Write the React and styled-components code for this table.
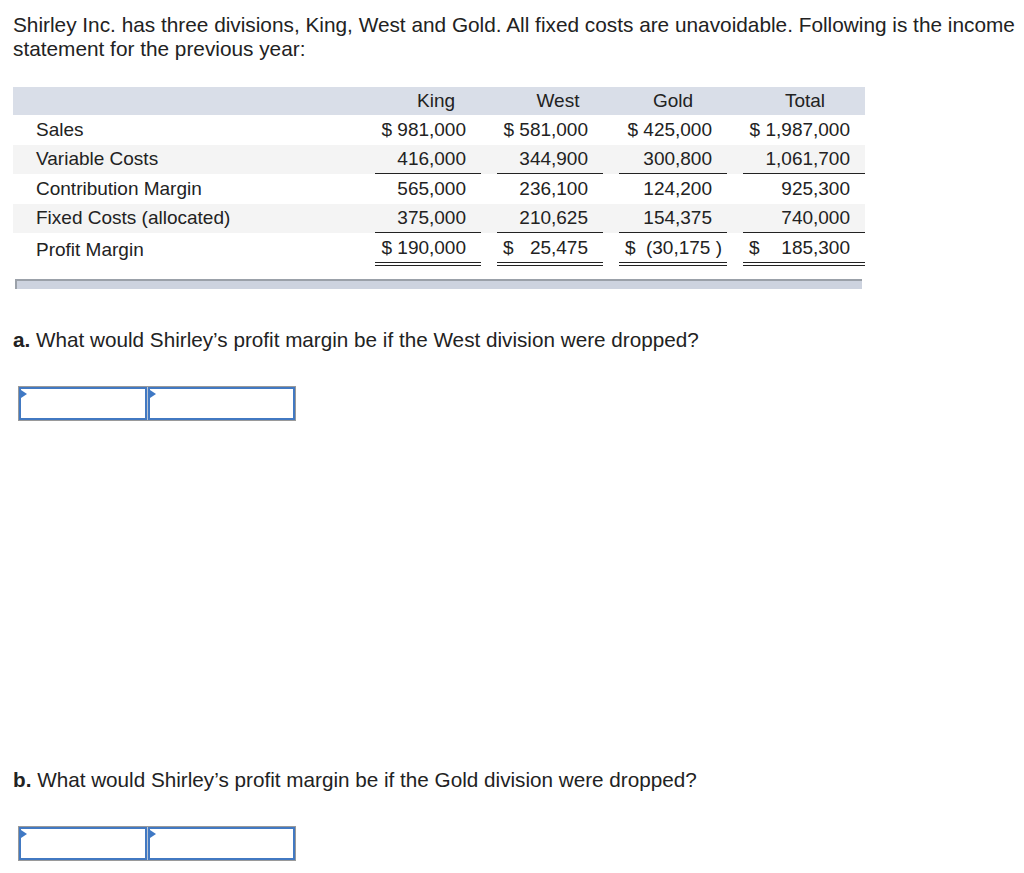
import React from 'react';
import styled, { createGlobalStyle } from 'styled-components';

const GlobalStyle = createGlobalStyle`
  body {
    margin: 0;
    background: #fff;
    font-family: 'Liberation Sans', Arial, sans-serif;
    color: #222;
  }
`;

const Page = styled.div`
  width: 1024px;
  height: 873px;
  padding: 13px 0 0 13px;
  box-sizing: border-box;
  overflow: hidden;
`;

const Intro = styled.p`
  margin: 0;
  font-size: 20.8px;
  line-height: 24px;
  width: 1010px;
`;

const Table = styled.div`
  margin-top: 26px;
  width: 852px;
  font-size: 19px;
`;

const Row = styled.div`
  display: flex;
  align-items: stretch;
  height: ${p => p.h || 29.5}px;
  background: ${p => p.bg || '#fff'};
`;

const Label = styled.div`
  width: 362px;
  padding-left: 23px;
  box-sizing: border-box;
  display: flex;
  align-items: center;
`;

const Cell = styled.div`
  width: ${p => p.w}px;
  margin-right: ${p => p.gap}px;
  box-sizing: border-box;
  display: flex;
  align-items: center;
  justify-content: space-between;
  padding: 0 ${p => (p.hang ? 5 : 15)}px 0 6px;
  border-bottom: ${p => p.line === 'single' ? '1px solid #222' : p.line === 'double' ? '4px double #222' : 'none'};
`;

const HeadCell = styled.div`
  width: ${p => p.w}px;
  margin-right: ${p => p.gap}px;
  box-sizing: border-box;
  display: flex;
  align-items: center;
  justify-content: center;
  padding-left: ${p => p.shift * 2}px;
`;

const Amount = styled.span`
  margin-left: auto;
`;

const ScrollBar = styled.div`
  margin: 13px 0 0 2px;
  width: 847px;
  height: 10px;
  box-sizing: border-box;
  background: #cdd3df;
  border-top: 2px solid #9ba1a9;
  border-left: 2px solid #9ba1a9;
`;

const Question = styled.p`
  margin: ${p => p.top}px 0 0;
  font-size: 20.7px;
  line-height: 24px;
`;

const Answer = styled.div`
  margin: ${p => p.top}px 0 0 5px;
  width: 278px;
  height: 35px;
  box-sizing: border-box;
  border: 1px solid #9a9a9a;
  display: flex;
  gap: 1px;
  background: #b9c4d4;
`;

const Field = styled.div`
  position: relative;
  width: ${p => p.w}px;
  height: 100%;
  box-sizing: border-box;
  border: 2px solid #4279c2;
  background: #fff;

  &::before {
    content: '';
    position: absolute;
    left: 0;
    top: 1px;
    border-left: 6px solid #3f78c4;
    border-top: 4px solid transparent;
    border-bottom: 4px solid transparent;
  }
`;

const columns = [
  { name: 'King', w: 106, gap: 16, shift: 8 },
  { name: 'West', w: 106, gap: 16, shift: 8 },
  { name: 'Gold', w: 108, gap: 16, shift: 0 },
  { name: 'Total', w: 122, gap: 0, shift: 1 },
];

const rows = [
  { label: 'Sales', values: ['981,000', '581,000', '425,000', '1,987,000'], dollar: 'joined' },
  { label: 'Variable Costs', values: ['416,000', '344,900', '300,800', '1,061,700'], bg: '#f4f4f4', line: 'single' },
  { label: 'Contribution Margin', values: ['565,000', '236,100', '124,200', '925,300'] },
  { label: 'Fixed Costs (allocated)', values: ['375,000', '210,625', '154,375', '740,000'], bg: '#f4f4f4', line: 'single' },
  { label: 'Profit Margin', values: ['190,000', '25,475', '(30,175 )', '185,300'], dollar: 'split', line: 'double', h: 33 },
];

function AnswerRow({ top }) {
  return (
    <Answer top={top}>
      <Field w={128} />
      <Field w={147} />
    </Answer>
  );
}

function Value({ v, dollar, first }) {
  if (dollar === 'joined' || (dollar === 'split' && first)) return <Amount>$ {v}</Amount>;
  if (dollar === 'split') {
    return (
      <>
        <span>$</span>
        <Amount>{v}</Amount>
      </>
    );
  }
  return <Amount>{v}</Amount>;
}

export default function App() {
  return (
    <Page>
      <GlobalStyle />
      <Intro>
        Shirley Inc. has three divisions, King, West and Gold. All fixed costs are unavoidable. Following is the income
        statement for the previous year:
      </Intro>

      <Table>
        <Row bg="#d9dee8" h={28}>
          <Label />
          {columns.map(c => (
            <HeadCell key={c.name} w={c.w} gap={c.gap} shift={c.shift}>
              {c.name}
            </HeadCell>
          ))}
        </Row>
        {rows.map(r => (
          <Row key={r.label} bg={r.bg} h={r.h}>
            <Label>{r.label}</Label>
            {columns.map((c, i) => (
              <Cell key={c.name} w={c.w} gap={c.gap} line={r.line} hang={r.values[i].endsWith(')')}>
                <Value v={r.values[i]} dollar={r.dollar} first={i === 0} />
              </Cell>
            ))}
          </Row>
        ))}
      </Table>

      <ScrollBar />

      <Question top={39}>
        <b>a.</b> What would Shirley’s profit margin be if the West division were dropped?
      </Question>
      <AnswerRow top={34} />

      <Question top={347}>
        <b>b.</b> What would Shirley’s profit margin be if the Gold division were dropped?
      </Question>
      <AnswerRow top={34} />
    </Page>
  );
}
